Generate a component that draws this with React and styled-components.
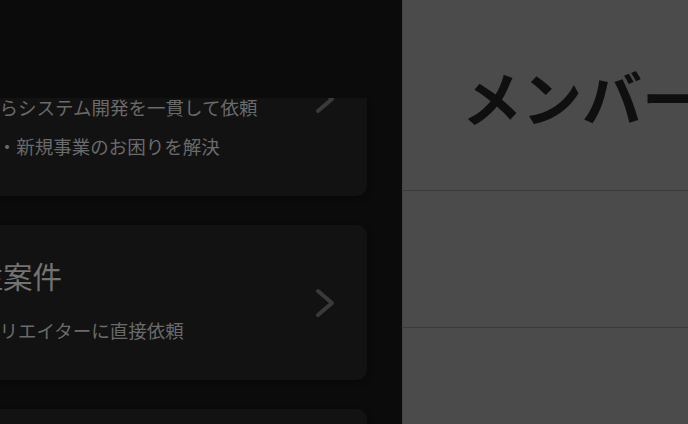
import { useLayoutEffect, useRef } from "react";
import styled, { createGlobalStyle } from "styled-components";

const GlobalStyle = createGlobalStyle`
  html, body {
    margin: 0;
    padding: 0;
    background: #0b0b0b;
  }
  body {
    font-family: "Noto Sans CJK JP", "Noto Sans", sans-serif;
  }
`;

const Layout = styled.div`
  display: flex;
  width: 688px;
  height: 424px;
  overflow: hidden;
`;

const Drawer = styled.aside`
  flex-shrink: 0;
  width: 492px;
  margin-left: -90px;
  height: 100%;
  background: #0b0b0b;
  overflow-y: auto;
  scrollbar-width: none;
  &::-webkit-scrollbar {
    display: none;
  }
`;

const DrawerHeader = styled.div`
  position: sticky;
  top: 0;
  z-index: 1;
  height: 98px;
  background: #0b0b0b;
`;

const MenuList = styled.div`
  display: flex;
  flex-direction: column;
  gap: 29px;
  padding: 24px 35px 40px 16px;
`;

const Card = styled.a`
  display: flex;
  align-items: center;
  padding: 30px 32px 30px 18px;
  background: #121212;
  border-radius: 10px;
  box-shadow: 0 2px 6px rgba(0, 0, 0, 0.35);
  text-decoration: none;
`;

const CardBody = styled.div`
  flex: 1;
  display: flex;
  flex-direction: column;
  gap: 16px;
  white-space: nowrap;
`;

const CardTitle = styled.div`
  font-size: 29.5px;
  line-height: 40px;
  color: #737373;
`;

const CardDesc = styled.div`
  font-size: 18.5px;
  line-height: 39px;
  color: #6a6a6a;
`;

const Chevron = styled.svg`
  flex-shrink: 0;
  width: 20px;
  height: 30px;
`;

const Page = styled.main`
  flex: 1;
  min-width: 0;
  background: #4b4b4b;
  border-left: 1px solid #444;
  overflow: hidden;
`;

const Heading = styled.h1`
  margin: 0;
  height: 190px;
  display: flex;
  align-items: center;
  padding-left: 59px;
  border-bottom: 1px solid #3a3a3a;
  font-size: 60px;
  font-weight: 700;
  color: #0f0f0f;
  white-space: nowrap;
`;

const Row = styled.div`
  height: 136px;
  border-bottom: 1px solid #3a3a3a;
`;

const menus = [
  {
    title: "受託開発",
    desc: ["企画からシステム開発を一貫して依頼", "AI活用・新規事業のお困りを解決"],
  },
  { title: "発注案件", desc: ["個人クリエイターに直接依頼"] },
  { title: "人材紹介", desc: ["優秀なエンジニアを採用"] },
  { title: "お問い合わせ", desc: ["お気軽にご相談ください"] },
];

const ChevronIcon = () => (
  <Chevron viewBox="0 0 20 30" fill="none">
    <polyline
      points="3,3 17,15 3,27"
      stroke="#3a3a3a"
      strokeWidth="4"
      strokeLinecap="round"
      strokeLinejoin="round"
    />
  </Chevron>
);

export default function App() {
  const drawerRef = useRef(null);

  useLayoutEffect(() => {
    if (drawerRef.current) drawerRef.current.scrollTop = 120;
  }, []);

  return (
    <Layout>
      <GlobalStyle />
      <Drawer ref={drawerRef}>
        <DrawerHeader />
        <MenuList>
          {menus.map((m) => (
            <Card key={m.title} href="#">
              <CardBody>
                <CardTitle>{m.title}</CardTitle>
                <div>
                  {m.desc.map((d) => (
                    <CardDesc key={d}>{d}</CardDesc>
                  ))}
                </div>
              </CardBody>
              <ChevronIcon />
            </Card>
          ))}
        </MenuList>
      </Drawer>
      <Page>
        <Heading>メンバー</Heading>
        <Row />
        <Row />
      </Page>
    </Layout>
  );
}
